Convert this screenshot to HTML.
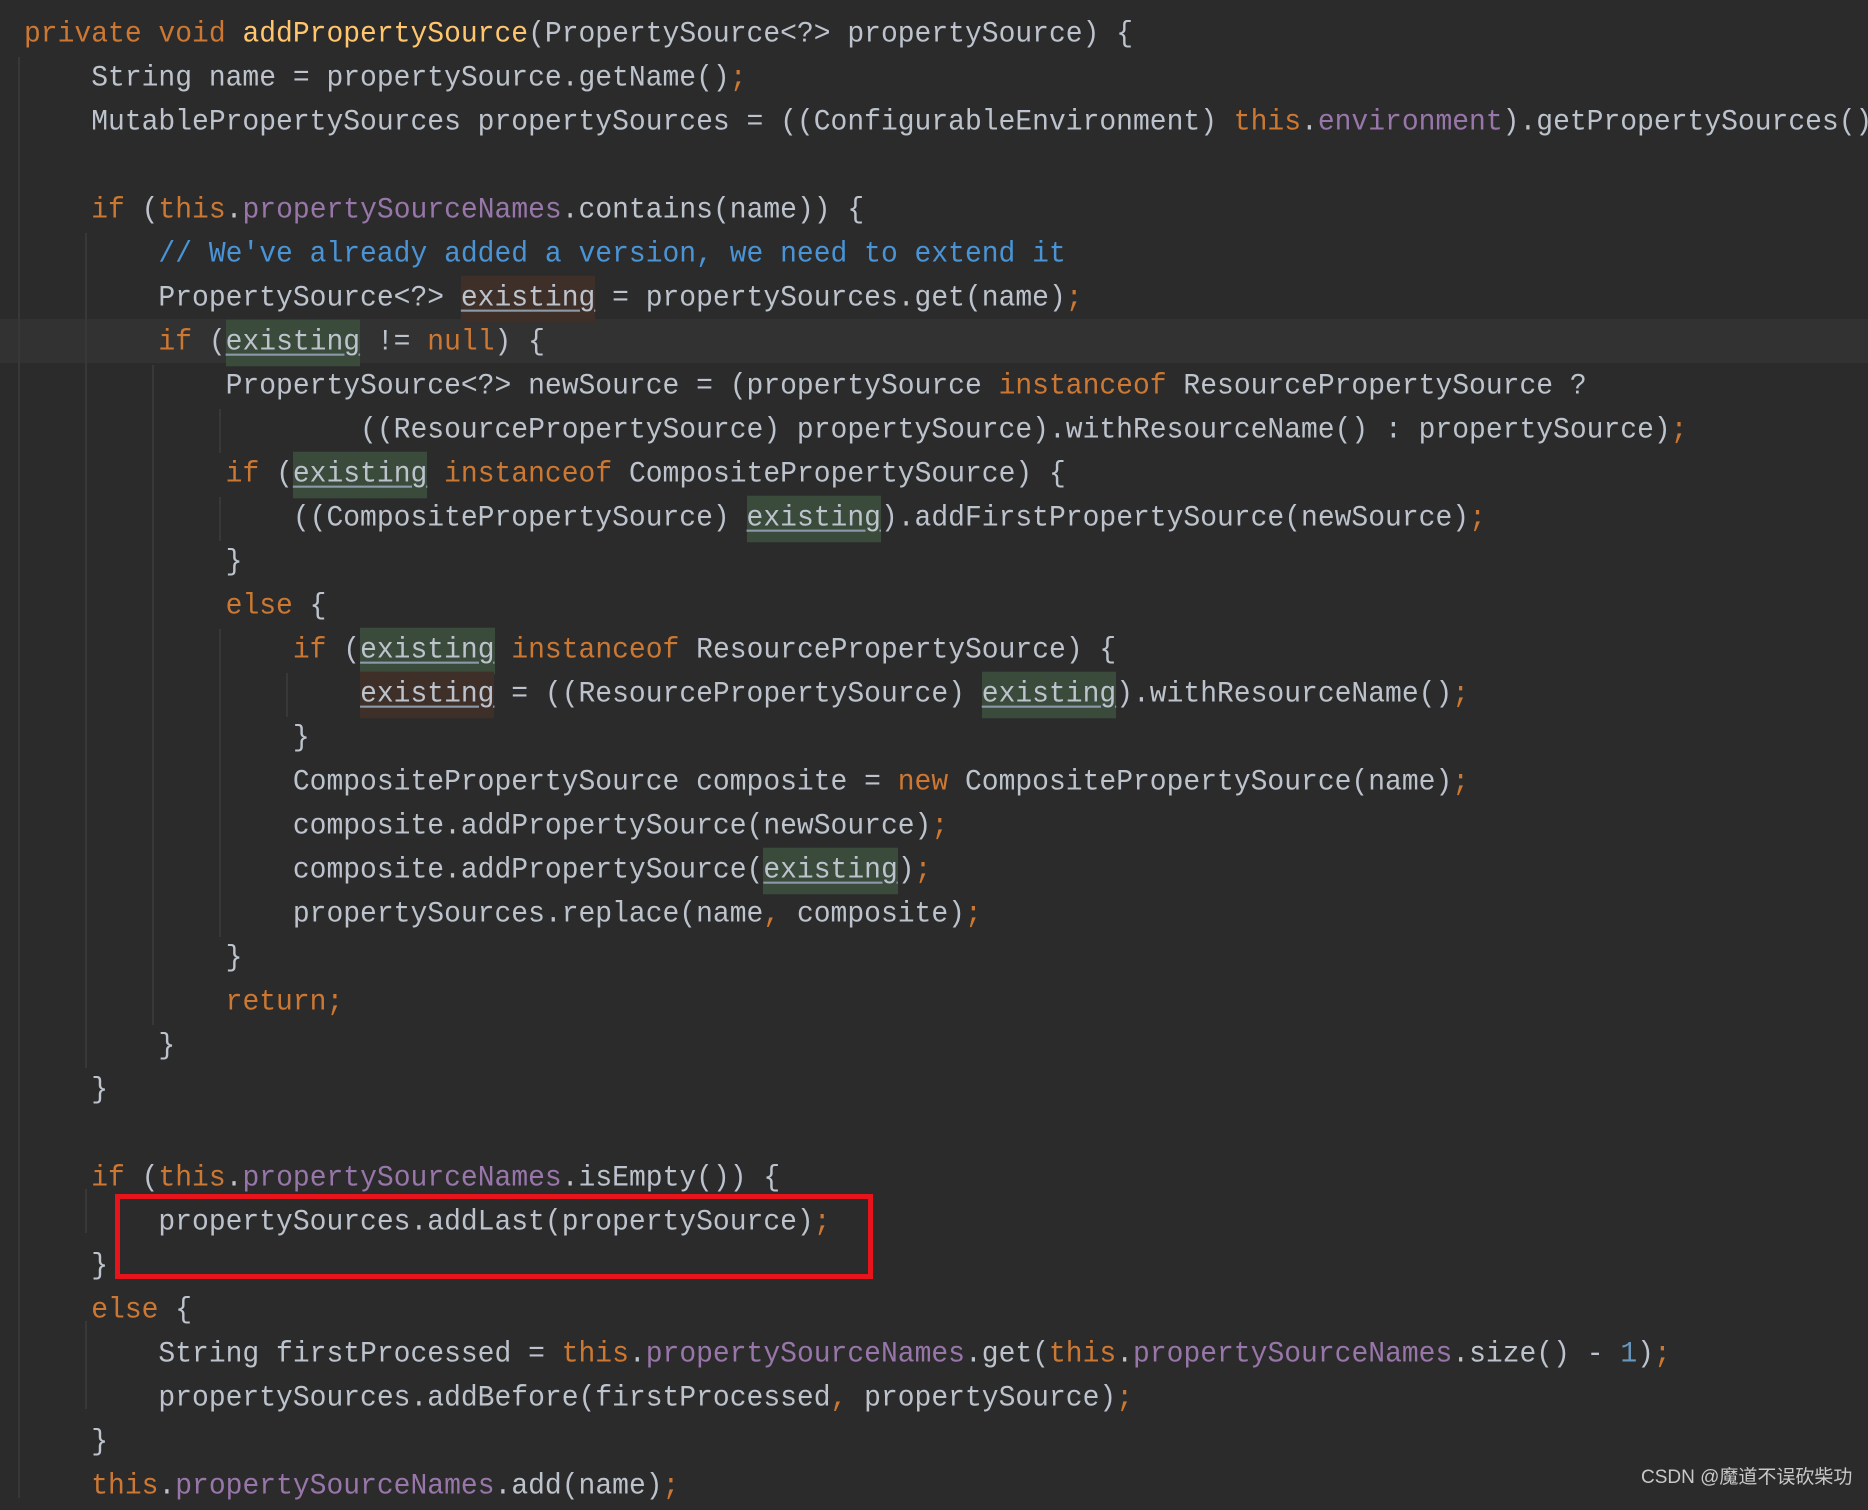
<!DOCTYPE html>
<html><head><meta charset="utf-8"><style>
body{margin:0;width:1868px;height:1498px;background:#2b2b2b;overflow:hidden;position:relative;font-family:"Liberation Mono",monospace;}
.l{position:absolute;left:24px;height:44px;line-height:44px;font-size:28px;color:#bcc3cc;white-space:pre;transform:scaleY(1.06);transform-origin:left center;}
.k{color:#cc7832}.f{color:#ffc66d}.p{color:#9876aa}.c{color:#4a94d6}.n{color:#6897bb}
.ew,.er{display:inline-block;height:44px;text-decoration:underline;text-underline-offset:4px;text-decoration-color:#8a9aa8}
.ew{background:#3e3029}.er{background:#3a4a3b}
.g{position:absolute;width:2px;background:#383838}
.cur{position:absolute;left:0;width:1868px;top:319px;height:44px;background:#323232}
.box{position:absolute;left:115px;top:1194px;width:748px;height:75px;border:5px solid #e8141b}
.wm{position:absolute;left:1641px;top:1462px;font-family:"Liberation Sans","Noto Sans CJK SC",sans-serif;font-size:19px;color:#c8c8c8}
</style></head><body>
<div class="cur"></div>
<div class="g" style="left:18px;top:57px;height:1441px"></div>
<div class="g" style="left:85px;top:233px;height:835px"></div>
<div class="g" style="left:152px;top:365px;height:660px"></div>
<div class="g" style="left:219px;top:409px;height:44px"></div>
<div class="g" style="left:219px;top:497px;height:44px"></div>
<div class="g" style="left:219px;top:629px;height:308px"></div>
<div class="g" style="left:286px;top:673px;height:44px"></div>
<div class="g" style="left:85px;top:1189px;height:44px"></div>
<div class="g" style="left:85px;top:1321px;height:88px"></div>

<div class="l" style="top:13px"><span class="k">private void </span><span class="f">addPropertySource</span>(PropertySource&lt;?&gt; propertySource) {</div>
<div class="l" style="top:57px">    String name = propertySource.getName()<span class="k">;</span></div>
<div class="l" style="top:101px">    MutablePropertySources propertySources = ((ConfigurableEnvironment) <span class="k">this</span>.<span class="p">environment</span>).getPropertySources()<span class="k">;</span></div>
<div class="l" style="top:189px">    <span class="k">if </span>(<span class="k">this</span>.<span class="p">propertySourceNames</span>.contains(name)) {</div>
<div class="l" style="top:233px">        <span class="c">// We've already added a version, we need to extend it</span></div>
<div class="l" style="top:277px">        PropertySource&lt;?&gt; <span class="ew">existing</span> = propertySources.get(name)<span class="k">;</span></div>
<div class="l" style="top:321px">        <span class="k">if </span>(<span class="er">existing</span> != <span class="k">null</span>) {</div>
<div class="l" style="top:365px">            PropertySource&lt;?&gt; newSource = (propertySource <span class="k">instanceof </span>ResourcePropertySource ?</div>
<div class="l" style="top:409px">                    ((ResourcePropertySource) propertySource).withResourceName() : propertySource)<span class="k">;</span></div>
<div class="l" style="top:453px">            <span class="k">if </span>(<span class="er">existing</span> <span class="k">instanceof </span>CompositePropertySource) {</div>
<div class="l" style="top:497px">                ((CompositePropertySource) <span class="er">existing</span>).addFirstPropertySource(newSource)<span class="k">;</span></div>
<div class="l" style="top:541px">            }</div>
<div class="l" style="top:585px">            <span class="k">else </span>{</div>
<div class="l" style="top:629px">                <span class="k">if </span>(<span class="er">existing</span> <span class="k">instanceof </span>ResourcePropertySource) {</div>
<div class="l" style="top:673px">                    <span class="ew">existing</span> = ((ResourcePropertySource) <span class="er">existing</span>).withResourceName()<span class="k">;</span></div>
<div class="l" style="top:717px">                }</div>
<div class="l" style="top:761px">                CompositePropertySource composite = <span class="k">new </span>CompositePropertySource(name)<span class="k">;</span></div>
<div class="l" style="top:805px">                composite.addPropertySource(newSource)<span class="k">;</span></div>
<div class="l" style="top:849px">                composite.addPropertySource(<span class="er">existing</span>)<span class="k">;</span></div>
<div class="l" style="top:893px">                propertySources.replace(name<span class="k">, </span>composite)<span class="k">;</span></div>
<div class="l" style="top:937px">            }</div>
<div class="l" style="top:981px">            <span class="k">return;</span></div>
<div class="l" style="top:1025px">        }</div>
<div class="l" style="top:1069px">    }</div>
<div class="l" style="top:1157px">    <span class="k">if </span>(<span class="k">this</span>.<span class="p">propertySourceNames</span>.isEmpty()) {</div>
<div class="l" style="top:1201px">        propertySources.addLast(propertySource)<span class="k">;</span></div>
<div class="l" style="top:1245px">    }</div>
<div class="l" style="top:1289px">    <span class="k">else </span>{</div>
<div class="l" style="top:1333px">        String firstProcessed = <span class="k">this</span>.<span class="p">propertySourceNames</span>.get(<span class="k">this</span>.<span class="p">propertySourceNames</span>.size() - <span class="n">1</span>)<span class="k">;</span></div>
<div class="l" style="top:1377px">        propertySources.addBefore(firstProcessed<span class="k">, </span>propertySource)<span class="k">;</span></div>
<div class="l" style="top:1421px">    }</div>
<div class="l" style="top:1465px">    <span class="k">this</span>.<span class="p">propertySourceNames</span>.add(name)<span class="k">;</span></div>
<div class="box"></div>
<div class="wm">CSDN @魔道不误砍柴功</div>
</body></html>
